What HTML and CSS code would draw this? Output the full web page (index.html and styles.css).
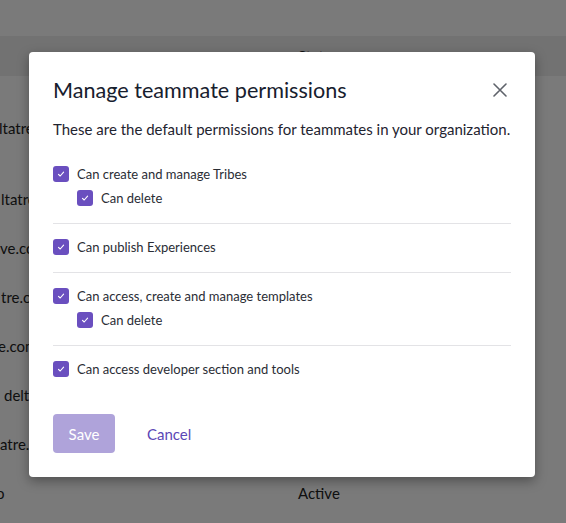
FILE: index.html
```html
<!DOCTYPE html>
<html>
<head>
<meta charset="utf-8">
<link rel="stylesheet" href="styles.css">
</head>
<body>
<div class="page">
  <div class="topbar"></div>
  <div class="thead"><span class="col-email"></span><span class="col-status">Status</span></div>
  <div class="row first"><span class="col-email e1">ltatre.com</span><span class="col-status"></span></div>
  <div class="row"><span class="col-email e2">ltatre.com</span><span class="col-status"></span></div>
  <div class="row"><span class="col-email e3">ve.com</span><span class="col-status"></span></div>
  <div class="row"><span class="col-email e4">tre.com</span><span class="col-status"></span></div>
  <div class="row"><span class="col-email e5">e.com</span><span class="col-status"></span></div>
  <div class="row"><span class="col-email e6">deltatre.com</span><span class="col-status"></span></div>
  <div class="row"><span class="col-email e7">atre.com</span><span class="col-status"></span></div>
  <div class="row"><span class="col-email e8">o</span><span class="col-status">Active</span></div>
</div>
<div class="overlay"></div>
<div class="modal">
  <div class="modal-head">
    <h2 class="title">Manage teammate permissions</h2>
    <button class="close" aria-label="Close">
      <svg width="14" height="14" viewBox="0 0 14 14"><path d="M1 1L13 13M13 1L1 13" stroke="#5f636b" stroke-width="1.6" stroke-linecap="round"/></svg>
    </button>
  </div>
  <p class="desc">These are the default permissions for teammates in your organization.</p>
  <div class="groups">
    <div class="group">
      <label class="opt"><span class="box"><svg viewBox="0 0 16 16"><path d="M5.5 8.3L7.2 10L10.6 6.2" fill="none" stroke="#fff" stroke-width="1.1" stroke-linecap="round" stroke-linejoin="round"/></svg></span>Can create and manage Tribes</label>
      <label class="opt sub"><span class="box"><svg viewBox="0 0 16 16"><path d="M5.5 8.3L7.2 10L10.6 6.2" fill="none" stroke="#fff" stroke-width="1.1" stroke-linecap="round" stroke-linejoin="round"/></svg></span>Can delete</label>
    </div>
    <div class="group">
      <label class="opt"><span class="box"><svg viewBox="0 0 16 16"><path d="M5.5 8.3L7.2 10L10.6 6.2" fill="none" stroke="#fff" stroke-width="1.1" stroke-linecap="round" stroke-linejoin="round"/></svg></span>Can publish Experiences</label>
    </div>
    <div class="group">
      <label class="opt"><span class="box"><svg viewBox="0 0 16 16"><path d="M5.5 8.3L7.2 10L10.6 6.2" fill="none" stroke="#fff" stroke-width="1.1" stroke-linecap="round" stroke-linejoin="round"/></svg></span>Can access, create and manage templates</label>
      <label class="opt sub"><span class="box"><svg viewBox="0 0 16 16"><path d="M5.5 8.3L7.2 10L10.6 6.2" fill="none" stroke="#fff" stroke-width="1.1" stroke-linecap="round" stroke-linejoin="round"/></svg></span>Can delete</label>
    </div>
    <div class="group last">
      <label class="opt"><span class="box"><svg viewBox="0 0 16 16"><path d="M5.5 8.3L7.2 10L10.6 6.2" fill="none" stroke="#fff" stroke-width="1.1" stroke-linecap="round" stroke-linejoin="round"/></svg></span>Can access developer section and tools</label>
    </div>
  </div>
  <div class="actions">
    <button class="save">Save</button>
    <button class="cancel">Cancel</button>
  </div>
</div>
</body>
</html>
```
FILE: styles.css
```css
* { box-sizing: border-box; }
html, body { margin: 0; padding: 0; }
body {
  width: 566px;
  height: 523px;
  overflow: hidden;
  position: relative;
  font-family: "Lato", "Open Sans", sans-serif;
  background: #fff;
}
.page { width: 566px; height: 523px; overflow: hidden; }
.topbar { height: 36px; background: #fff; }
.thead {
  height: 40px;
  background: #eeeeee;
  display: flex;
  align-items: center;
  font-size: 15px;
  color: #222;
}
.row {
  height: 49px;
  display: flex;
  align-items: center;
  font-size: 15px;
  color: #222;
  white-space: nowrap;
}
.row.first { height: 98px; align-items: flex-start; padding-top: 42px; line-height: 20px; }
.col-email { width: 30px; overflow: hidden; flex-shrink: 0; }
.col-status { margin-left: 268px; }
.e1 { margin-left: -1px; width: 31px; }
.e2 { margin-left: 1px; width: 29px; }
.e3 { margin-left: 0; }
.e4 { margin-left: 1px; }
.e5 { margin-left: -2px; width: 32px; }
.e6 { margin-left: 4px; width: 26px; }
.e7 { margin-left: 0; }
.e8 { margin-left: -4px; width: 34px; }
.overlay {
  position: absolute;
  inset: 0;
  background: rgba(0, 0, 0, 0.52);
}
.modal {
  position: absolute;
  left: 29px;
  top: 52px;
  width: 506px;
  height: 425px;
  background: #fff;
  border-radius: 4px;
  box-shadow: 0 4px 12px rgba(0,0,0,0.35);
  padding: 24px 24px 24px 24px;
  display: flex;
  flex-direction: column;
}
.modal-head {
  display: flex;
  align-items: center;
  justify-content: space-between;
  height: 28px;
}
.title {
  margin: 0;
  font-size: 21.6px;
  font-weight: 400;
  color: #17202e;
  line-height: 28px;
}
.close {
  border: 0;
  background: none;
  padding: 0;
  width: 14px;
  height: 14px;
  margin-right: 4px;
  display: flex;
}
.desc {
  margin: 15px 0 0 0;
  font-size: 15px;
  line-height: 20px;
  color: #1f2430;
}
.groups { margin-top: 12px; }
.group {
  padding: 11px 0 13px;
  border-bottom: 1px solid #e3e3e6;
}
.group.last { border-bottom: 0; padding-bottom: 12px; }
.opt {
  display: flex;
  align-items: center;
  height: 24px;
  font-size: 13px;
  color: #2a2d35;
  gap: 8px;
}
.opt.sub { padding-left: 24px; }
.box {
  width: 16px;
  height: 16px;
  border-radius: 3px;
  background: #6a4fbf;
  display: flex;
}
.box svg { width: 16px; height: 16px; }
.actions {
  margin-top: 21px;
  display: flex;
  align-items: center;
  gap: 32px;
}
.save {
  width: 62px;
  height: 39px;
  border: 0;
  border-radius: 4px;
  background: #afa3da;
  color: #fff;
  font-family: inherit;
  font-size: 15px;
  padding: 0;
}
.cancel {
  border: 0;
  background: none;
  padding: 0;
  font-family: inherit;
  font-size: 15px;
  color: #5b47b6;
}
```
